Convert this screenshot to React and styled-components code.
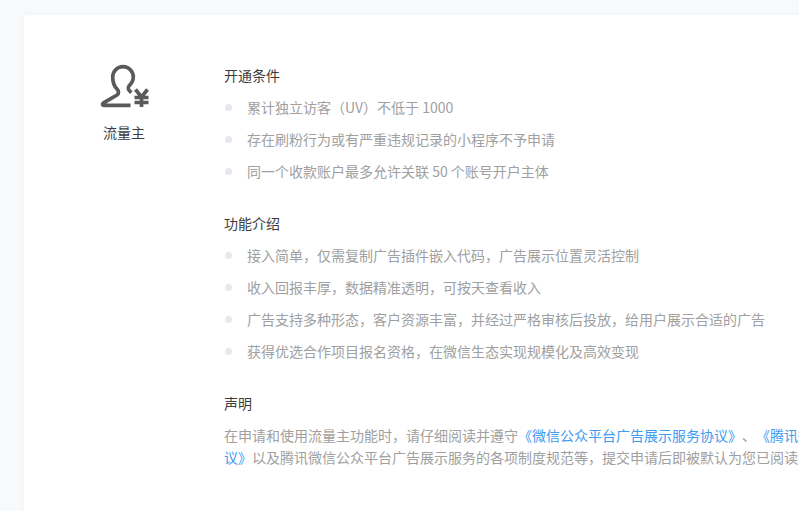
import styled, { createGlobalStyle } from "styled-components"

const GlobalStyle = createGlobalStyle`
  html, body {
    margin: 0;
    height: 100%;
    overflow: hidden;
    background: #f8f9fb;
  }
`

const Page = styled.div`
  padding: 15px 0 0 24px;
  height: 511px;
  box-sizing: border-box;
  overflow: hidden;
  font-family: "Noto Sans CJK SC", "Noto Sans", sans-serif;
  font-size: 14px;
  line-height: 22px;
  text-spacing-trim: space-all;
`

const Card = styled.div`
  width: 1000px;
  height: 600px;
  box-sizing: border-box;
  padding-top: 49px;
  display: flex;
  background: #fff;
  border-radius: 4px;
  box-shadow: 0 0 6px rgba(0, 0, 0, 0.03);
`

const Side = styled.div`
  width: 200px;
  flex-shrink: 0;
  display: flex;
  flex-direction: column;
  align-items: center;
`

const Label = styled.div`
  margin-top: 13px;
  color: #3c3c3c;
`

const Content = styled.div`
  width: 765px;
`

const Section = styled.section`
  margin-bottom: 25px;
`

const Heading = styled.div`
  color: #3c3c3c;
  margin-bottom: ${(props) => props.$gap || 5}px;
`

const List = styled.ul`
  list-style: none;
  margin: 0;
  padding: 0;
`

const Item = styled.li`
  height: 32px;
  display: flex;
  align-items: center;
  gap: 15px;
  color: #a0a0a0;
  white-space: nowrap;

  &::before {
    content: "";
    width: 7px;
    height: 7px;
    margin-left: 1px;
    border-radius: 50%;
    background: #e8e8ef;
  }
`

const Notice = styled.p`
  margin: 0;
  color: #a0a0a0;
`

const Agreement = styled.a`
  color: #3d9bf0;
  text-decoration: none;
`

const UserYenIcon = () => (
  <svg width="50" height="44" viewBox="99 64 50 44" fill="none" stroke="#5a5a5a">
    <path
      d="M130.5 105.3H104c-1.6 0-2-1.2-.8-2.2L117 95c2-1.4 2-3.8 0-6-3-3-4.3-7-4.3-12 0-5.7 4.6-10.3 10.3-10.3S133.3 71.3 133.3 77c0 4-2.3 7-4.300 9-1.500 2-1 4 2.500 6.500"
      strokeWidth="3.7"
    />
    <path
      d="M135.500 89.500l6 7.500 6-7.500M141.500 96v11M134.500 97.500h14M134.500 102.500h14"
      strokeWidth="3.700"
    />
  </svg>
)

const conditions = [
  "累计独立访客（UV）不低于 1000",
  "存在刷粉行为或有严重违规记录的小程序不予申请",
  "同一个收款账户最多允许关联 50 个账号开户主体",
]

const features = [
  "接入简单，仅需复制广告插件嵌入代码，广告展示位置灵活控制",
  "收入回报丰厚，数据精准透明，可按天查看收入",
  "广告支持多种形态，客户资源丰富，并经过严格审核后投放，给用户展示合适的广告",
  "获得优选合作项目报名资格，在微信生态实现规模化及高效变现",
]

export default function App() {
  return (
    <Page>
      <GlobalStyle />
      <Card>
        <Side>
          <UserYenIcon />
          <Label>流量主</Label>
        </Side>
        <Content>
          <Section>
            <Heading>开通条件</Heading>
            <List>
              {conditions.map((text) => (
                <Item key={text}>{text}</Item>
              ))}
            </List>
          </Section>
          <Section>
            <Heading>功能介绍</Heading>
            <List>
              {features.map((text) => (
                <Item key={text}>{text}</Item>
              ))}
            </List>
          </Section>
          <Section>
            <Heading $gap={10}>声明</Heading>
            <Notice>
              在申请和使用流量主功能时，请仔细阅读并遵守
              <Agreement href="#">《微信公众平台广告展示服务协议》</Agreement>、
              <Agreement href="#">《腾讯微信公众平台广告展示服务协议》</Agreement>
              以及腾讯微信公众平台广告展示服务的各项制度规范等，提交申请后即被默认为您已阅读并同意。
            </Notice>
          </Section>
        </Content>
      </Card>
    </Page>
  )
}
